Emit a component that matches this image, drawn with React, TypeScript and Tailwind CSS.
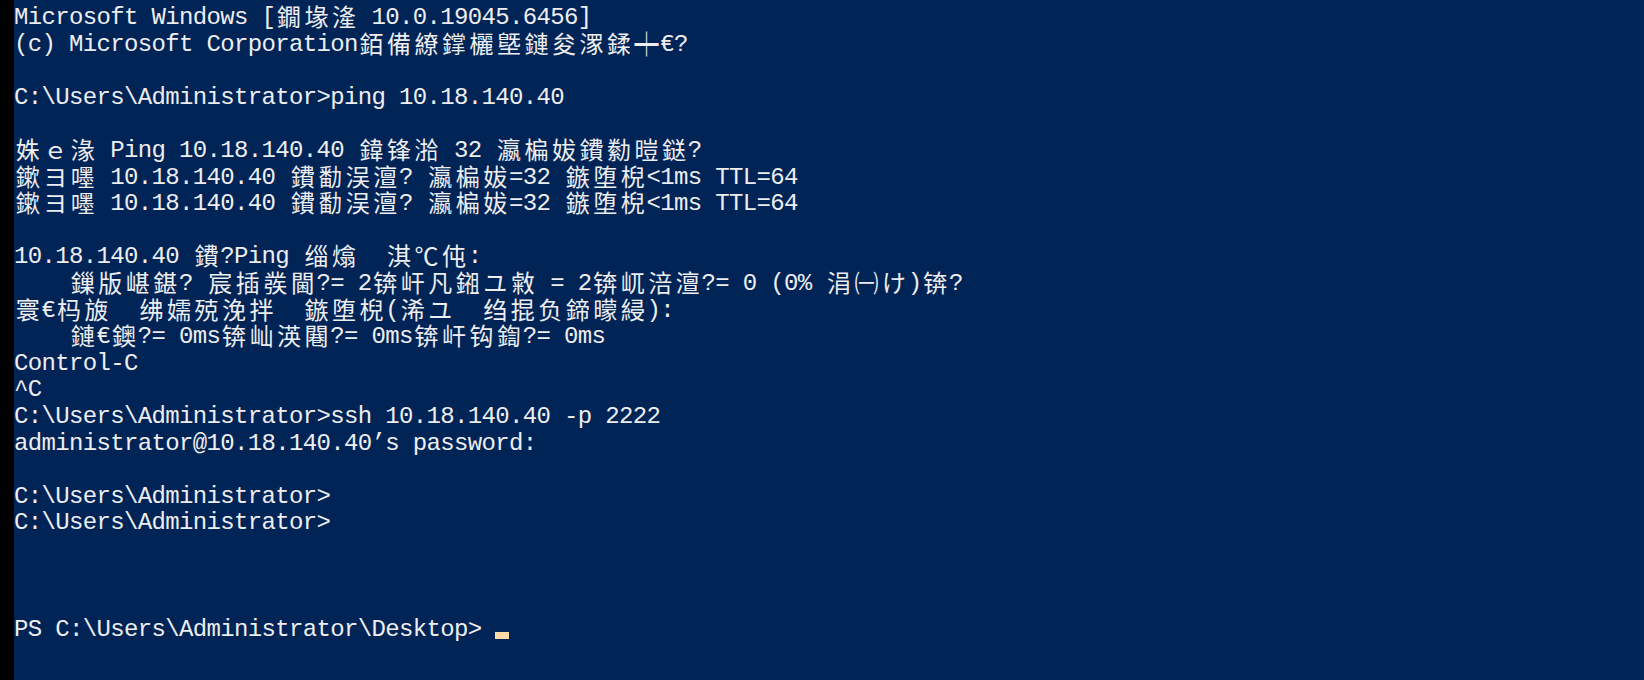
const lines: string[] = [
    "Microsoft Windows [鐗堟湰 10.0.19045.6456]",
    "(c) Microsoft Corporation銆備繚鐣欐墍鏈夋潈鍒┿€?",
    "",
    "C:\\Users\\Administrator>ping 10.18.140.40",
    "",
    "姝ｅ湪 Ping 10.18.140.40 鍏锋湁 32 瀛楄妭鐨勬暟鎹?",
    "鏉ヨ嚜 10.18.140.40 鐨勫洖澶? 瀛楄妭=32 鏃堕棿<1ms TTL=64",
    "鏉ヨ嚜 10.18.140.40 鐨勫洖澶? 瀛楄妭=32 鏃堕棿<1ms TTL=64",
    "",
    "10.18.140.40 鐨?Ping 缁熻\u3000淇℃伅:",
    "    鏁版嵁鍖? 宸插彂閫?= 2锛屽凡鎺ユ敹 = 2锛屼涪澶?= 0 (0% 涓㈠け)锛?",
    "寰€杩旇\u3000绋嬬殑浼拌\u3000鏃堕棿(浠ユ\u3000绉掍负鍗曚綅):",
    "    鏈€鐭?= 0ms锛屾渶闀?= 0ms锛屽钩鍧?= 0ms",
    "Control-C",
    "^C",
    "C:\\Users\\Administrator>ssh 10.18.140.40 -p 2222",
    "administrator@10.18.140.40’s password:",
    "",
    "C:\\Users\\Administrator>",
    "C:\\Users\\Administrator>",
    "",
    "",
    "",
];

// double-width glyphs in the console grid (CJK, kana, fullwidth forms)
function isWide(ch: string) {
    const c = ch.codePointAt(0) ?? 0;
    return c >= 0x2e80 || c === 0x2103 || c === 0x253f;
}

function ConsoleLine({ text }: { text: string }) {
    const parts: React.ReactNode[] = [];
    let run = "";
    Array.from(text).forEach((ch, i) => {
        if (isWide(ch)) {
            if (run) {
                parts.push(run);
                run = "";
            }
            parts.push(
                <span
                    key={i}
                    className="inline-block h-[26.6px] w-[27.5px] align-top text-center font-['Noto_Sans_CJK_SC',sans-serif] text-[24px] leading-[21px] tracking-normal"
                >
                    {ch}
                </span>
            );
        } else {
            run += ch;
        }
    });
    if (run) parts.push(run);

    return <div className="h-[26.6px] whitespace-pre">{parts}</div>;
}

export default function App() {
    return (
        <div className="flex h-[680px] w-full overflow-hidden bg-black">
            {/* left edge of the window */}
            <div className="w-[14px] shrink-0 bg-black" />

            {/* console body */}
            <div className="flex-1 overflow-hidden bg-[#012456] pt-[5px] font-['Liberation_Mono',monospace] text-[24px] leading-[26.6px] tracking-[-0.652px] text-[#eeedf0]">
                {lines.map((line, i) => (
                    <ConsoleLine key={i} text={line} />
                ))}
                <div className="h-[26.6px] whitespace-pre">
                    {"PS C:\\Users\\Administrator\\Desktop> "}
                    <span className="inline-block h-[7px] w-[14px] bg-[#fddca8] align-[-3px]" />
                </div>
            </div>
        </div>
    );
}
